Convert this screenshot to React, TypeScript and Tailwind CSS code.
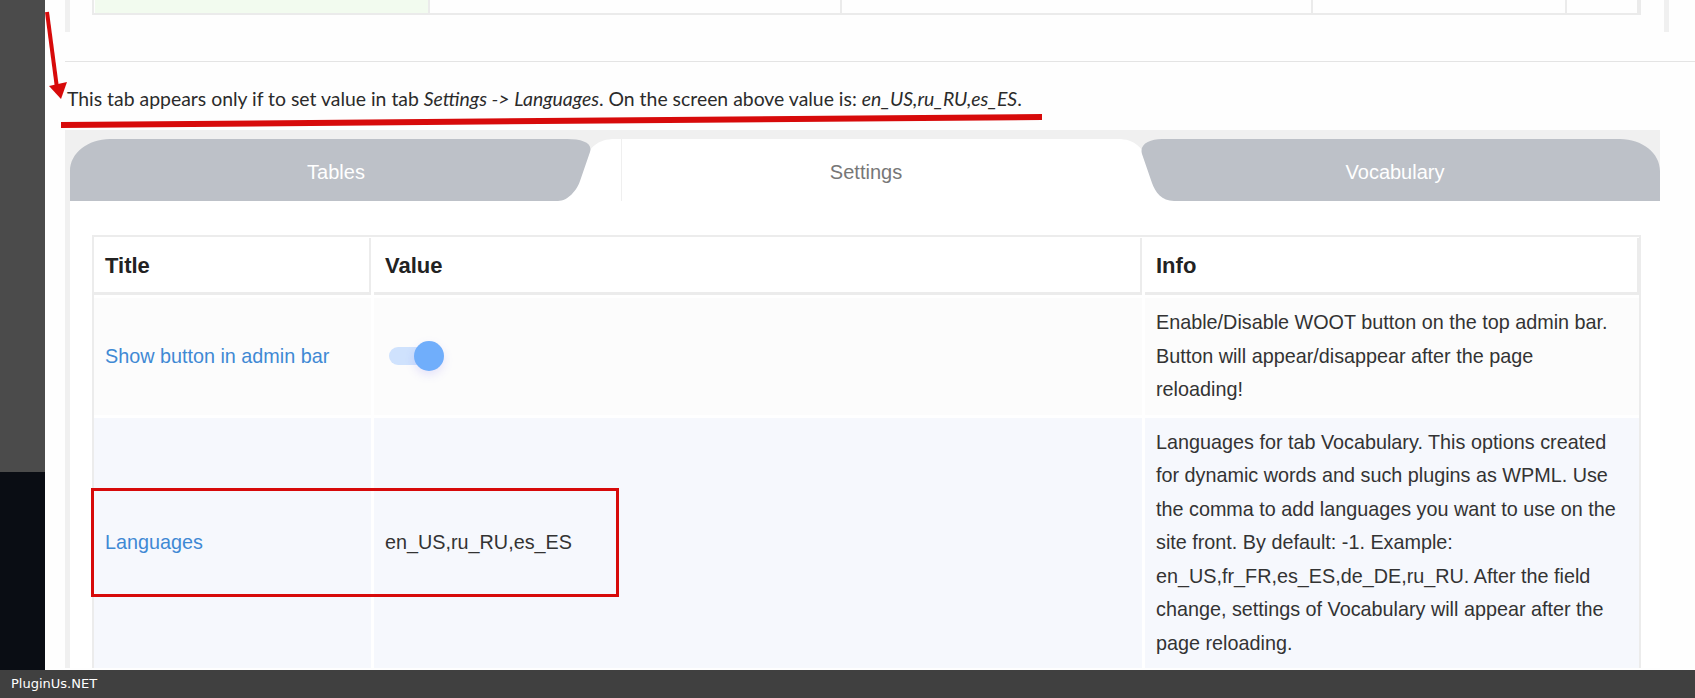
import React from 'react';

const cellText = 'font-["Liberation_Sans",Arial,sans-serif] text-[19.8px] leading-[33.5px] text-[#333]';

const TabShapes = () => (
  <svg className="absolute inset-0" width="1590" height="62" viewBox="0 0 1590 62">
    {/* active tab */}
    <path d="M480 62 C500 62 508 40 512 28 C518 8 528 0 545 0 L1048 0 C1064 0 1074 8 1080 28 C1084 40 1092 62 1112 62 Z" fill="#ffffff" />
    <line x1="551.5" y1="0" x2="551.5" y2="62" stroke="#efefef" strokeWidth="1" />
    {/* Tables */}
    <path d="M0 62 L0 32 C0 14 18 0 40 0 L497 0 C512 0 523 4 520 13 L510 42 C507 51 498 62 488 62 Z" fill="#bdc1c8" />
    {/* Vocabulary */}
    <path d="M1590 62 L1590 32 C1590 14 1572 0 1550 0 L1092 0 C1080 0 1069 5 1072 15 L1082 44 C1085 53 1092 62 1104 62 Z" fill="#bdc1c8" />
  </svg>
);

const Toggle = () => (
  <div className="relative ml-[4px] h-[18px] w-[50px] rounded-full bg-[#cfe2fd]">
    <div className="absolute right-[-5px] top-[-6px] h-[30px] w-[30px] rounded-full bg-[#70aefb] shadow-[0_4px_10px_rgba(120,110,240,0.18)]" />
  </div>
);

export default function App() {
  return (
    <div className="relative flex h-[698px] w-[1695px] flex-col overflow-hidden bg-white">
      <div className="flex min-h-0 flex-1">
        <aside className="flex w-[45px] shrink-0 flex-col">
          <div className="h-[472px] bg-[#4b4b4b]" />
          <div className="flex-1 bg-[#0a0d14]" />
        </aside>

        <main className="min-w-0 flex-1 bg-[#fefefe]">
          {/* end of the previous panel */}
          <div className="ml-[20px] h-[32px] w-[1604px] border-x-[5px] border-[#f0f0f0] pl-[22px] pr-[23px]">
            <div className="flex h-[15px] border-x-2 border-b-2 border-[#ebebeb] pl-px">
              <div className="w-[335px] border-r-2 border-[#ebebeb] bg-[#f2fbef]" />
              <div className="w-[412px] border-r-2 border-[#ebebeb]" />
              <div className="w-[471px] border-r-2 border-[#ebebeb]" />
              <div className="w-[254px] border-r-2 border-[#ebebeb]" />
              <div className="w-[72px] border-r-2 border-[#ebebeb]" />
            </div>
          </div>

          <div className="ml-[20px] mt-[29px] h-px bg-[#e4e4e4]" />

          <p className="ml-[22px] mt-[23px] font-['Lato','Open_Sans',sans-serif] text-[19.4px] leading-[28px] text-[#2b2b2b]">
            This tab appears only if to set value in tab <em>Settings -&gt; Languages</em>. On the screen above value is:{' '}
            <em>en_US,ru_RU,es_ES</em>.
          </p>

          {/* tabs */}
          <div className="ml-[20px] mt-[17px] w-[1595px]">
            <div className="bg-[#f0f0f0] pl-[5px] pt-[9px]">
              <div className="relative h-[62px] w-[1590px]">
                <TabShapes />
                <div className="relative flex h-full items-center pt-[3px] font-['Liberation_Sans',Arial,sans-serif] text-[20px]">
                  <div className="w-[532px] text-center text-white">Tables</div>
                  <div className="w-[528px] text-center text-[#777]">Settings</div>
                  <div className="w-[530px] text-center text-white">Vocabulary</div>
                </div>
              </div>
            </div>

            <div className="border-l-[5px] border-[#f0f0f0] bg-white pl-[22px] pr-[19px] pt-[34px]">
              <div className="w-[1549px] border-2 border-b-0 border-[#ececec]">
                <div className="grid grid-cols-[277px_768px_494px] gap-[3px]">
                  {['Title', 'Value', 'Info'].map((h) => (
                    <div
                      key={h}
                      className="mt-px flex h-[57px] items-center border-b-[3px] border-r-2 border-[#ececec] px-[11px] font-['Liberation_Sans',Arial,sans-serif] text-[22px] font-bold text-[#222]"
                    >
                      {h}
                    </div>
                  ))}

                  <div className={`flex items-center bg-[#fcfcfc] px-[11px] py-2 ${cellText}`}>
                    <span className="text-[#3f89d4]">Show button in admin bar</span>
                  </div>
                  <div className="flex items-center bg-[#fcfcfc] px-[11px] py-2">
                    <Toggle />
                  </div>
                  <div className={`bg-[#fcfcfc] py-2 pl-[11px] pr-[17px] ${cellText}`}>
                    Enable/Disable WOOT button on the top admin bar. Button will appear/disappear after the page reloading!
                  </div>

                  <div className={`flex items-center bg-[#f6f8fd] px-[11px] py-2 ${cellText}`}>
                    <span className="text-[#3f89d4]">Languages</span>
                  </div>
                  <div className={`flex items-center bg-[#f6f8fd] px-[11px] py-2 ${cellText}`}>en_US,ru_RU,es_ES</div>
                  <div className={`bg-[#f6f8fd] py-2 pl-[11px] pr-[17px] ${cellText}`}>
                    Languages for tab Vocabulary. This options created for dynamic words and such plugins as WPML. Use the comma
                    to add languages you want to use on the site front. By default: -1. Example: en_US,fr_FR,es_ES,de_DE,ru_RU.
                    After the field change, settings of Vocabulary will appear after the page reloading.
                  </div>
                </div>
              </div>
            </div>
          </div>
        </main>
      </div>

      <footer className="flex h-[28px] shrink-0 items-center bg-[#404040] pl-[11px] font-['DejaVu_Sans',sans-serif] text-[13px] text-white">
        PluginUs.NET
      </footer>

      {/* red annotations drawn over the screenshot */}
      <svg className="pointer-events-none absolute inset-0" width="1695" height="698" viewBox="0 0 1695 698">
        <line x1="47" y1="12" x2="57" y2="88" stroke="#d70a0a" strokeWidth="4" />
        <polygon points="49,86 67,82 61,99" fill="#d70a0a" />
        <polygon points="61,122 1042,114 1042,120 61,128" fill="#d70a0a" />
        <rect x="92.5" y="489.5" width="525" height="106" fill="none" stroke="#d70a0a" strokeWidth="3" />
      </svg>
    </div>
  );
}
